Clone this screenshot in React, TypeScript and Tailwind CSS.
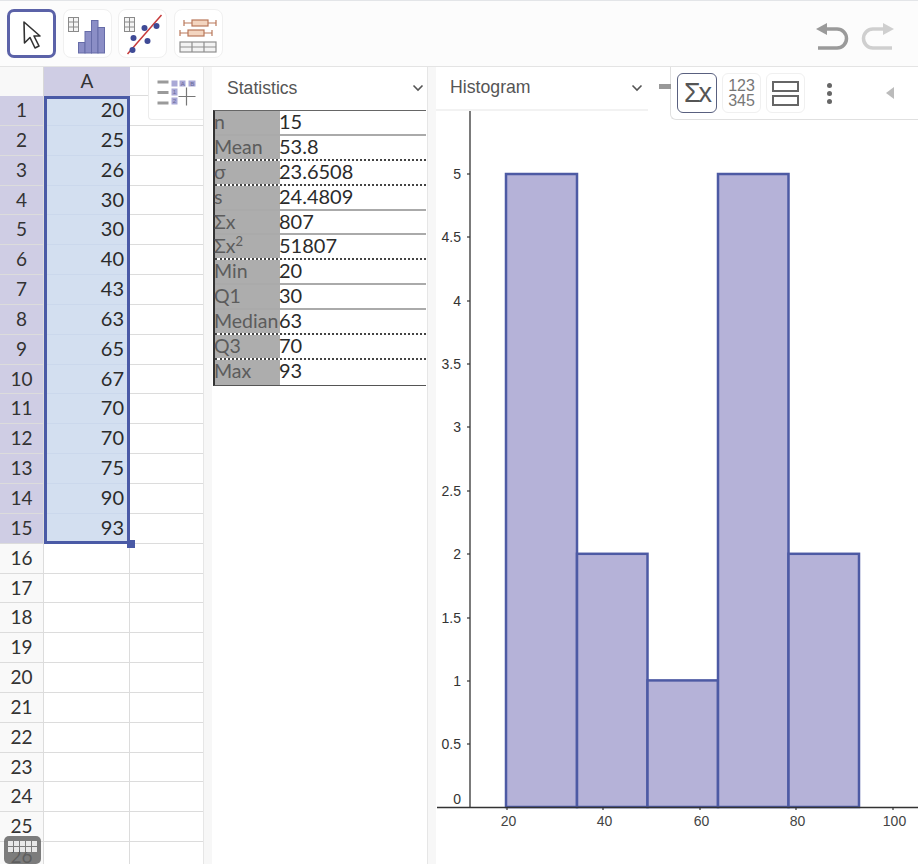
import React from "react";

const colA = [20, 25, 26, 30, 30, 40, 43, 63, 65, 67, 70, 70, 75, 90, 93];
const rows = Array.from({ length: 26 }, (_, i) => i + 1);
const stats: { k: React.ReactNode; v: string; dotted: boolean }[] = [
  { k: "n", v: "15", dotted: false },
  { k: "Mean", v: "53.8", dotted: true },
  { k: "σ", v: "23.6508", dotted: true },
  { k: "s", v: "24.4809", dotted: false },
  { k: "Σx", v: "807", dotted: false },
  { k: <>Σx<sup className="text-[13px] leading-none align-[7px] top-0">2</sup></>, v: "51807", dotted: true },
  { k: "Min", v: "20", dotted: false },
  { k: "Q1", v: "30", dotted: false },
  { k: "Median", v: "63", dotted: true },
  { k: "Q3", v: "70", dotted: true },
  { k: "Max", v: "93", dotted: false },
];

function ToolButton({ active, children }: { active?: boolean; children: React.ReactNode }) {
  return (
    <div
      className={
        active
          ? "w-[49px] h-[49px] rounded-[7px] border-[3px] border-[#5b62a8] bg-white flex items-center justify-center"
          : "w-[49px] h-[49px] rounded-[8px] border border-[#f0f0f0] bg-white flex items-center justify-center"
      }
    >
      {children}
    </div>
  );
}

function GridGlyph() {
  return (
    <g fill="none" stroke="#8a8a8a" strokeWidth="1">
      <rect x="3.5" y="5.500" width="10" height="14" fill="#f4f4f4" />
      <path d="M8.500 5.500V19.500M3.500 10H13.500M3.500 15H13.500" />
    </g>
  );
}

function Chart() {
  const bars = [
    [506, 577, 5],
    [577, 647.5, 2],
    [647.5, 718, 1],
    [718, 788.5, 5],
    [788.5, 859, 2],
  ];
  const yTicks: [string, number][] = [
    ["5", 174], ["4.5", 237], ["4", 301], ["3.5", 364], ["3", 427], ["2.5", 491],
    ["2", 554], ["1.5", 618], ["1", 681], ["0.5", 744],
  ];
  const xTicks: [string, number][] = [["20", 507], ["40", 603], ["60", 700], ["80", 796], ["100", 893]];
  const ox = 436;
  const oy = 111;
  return (
    <svg width="482" height="753" viewBox={`${ox} ${oy} 482 753`} className="block" fontFamily="'Liberation Sans', Arial, sans-serif">
      {bars.map(([a, b, v]) => (
        <rect key={a} x={a} y={807 - v * 126.6} width={b - a} height={v * 126.6} fill="#b5b2d8" stroke="#4d5aa4" strokeWidth="2.500" />
      ))}
      <path d="M470 111V807" stroke="#333" strokeWidth="1.300" />
      <path d="M437 807.500H918" stroke="#333" strokeWidth="1.300" />
      {yTicks.map(([t, y]) => (
        <g key={t}>
          <path d={`M470 ${y}h-3`} stroke="#333" strokeWidth="1.200" />
          <text x="461" y={y + 5} textAnchor="end" fontSize="14" fill="#333">{t}</text>
        </g>
      ))}
      <text x="461" y="804" textAnchor="end" fontSize="14" fill="#333">0</text>
      {xTicks.map(([t, x]) => (
        <g key={t}>
          <path d={`M${x} 807v3`} stroke="#333" strokeWidth="1.200" />
          <text x={x + 1.500} y="826" textAnchor="middle" fontSize="14" fill="#444">{t}</text>
        </g>
      ))}
    </svg>
  );
}

function Chevron() {
  return (
    <svg width="12" height="8" viewBox="0 0 12 8" fill="none" stroke="#555" strokeWidth="1.600">
      <path d="M1.500 1.500 6 6l4.500-4.500" />
    </svg>
  );
}

export default function App() {
  return (
    <div className="relative w-[918px] h-[864px] overflow-hidden bg-white font-['Lato','Liberation_Sans',sans-serif] text-[#2b2b2b]">
      {/* Top toolbar */}
      <div className="h-[67px] bg-[#fcfcfc] border-t border-b border-t-[#e3e5e8] border-b-[#e4e4e4] flex items-center pl-[7px] pr-[23px] gap-[6.5px] box-border">
        <ToolButton active>
          <svg width="24" height="32" viewBox="0 0 24 32" fill="none" stroke="#333" strokeWidth="1.600" strokeLinejoin="round">
            <path d="M4 4 4.500 25 10 19.500 15 30l4-2-5-10h6z" fill="#fff" />
          </svg>
        </ToolButton>
        <ToolButton>
          <svg width="44" height="44" viewBox="0 0 44 44">
            <GridGlyph />
            <g fill="#8b8ec6" stroke="#666ca8" strokeWidth="1">
              <rect x="13.500" y="30.500" width="6.500" height="10.500" />
              <rect x="20" y="19.500" width="6.500" height="21.500" />
              <rect x="26.500" y="8.500" width="6.500" height="32.500" />
              <rect x="33" y="15.500" width="6.500" height="25.500" />
            </g>
          </svg>
        </ToolButton>
        <ToolButton>
          <svg width="44" height="44" viewBox="0 0 44 44">
            <GridGlyph />
            <path d="M6.500 42 40.500 3" stroke="#c73a3a" strokeWidth="1.500" />
            <g fill="#3f4a96">
              <circle cx="11.500" cy="38" r="3" />
              <circle cx="12.500" cy="26" r="3" />
              <circle cx="26.500" cy="29" r="3" />
              <circle cx="23.500" cy="16" r="3" />
              <circle cx="35.500" cy="14" r="3" />
            </g>
          </svg>
        </ToolButton>
        <ToolButton>
          <svg width="44" height="44" viewBox="0 0 44 44" fill="none">
            <g stroke="#b9785a" strokeWidth="1.200">
              <path d="M8 8v6M40 8v6M8 11h8M32 11h8" />
              <rect x="16" y="8" width="16" height="6" fill="#f3d5c0" />
              <path d="M4 18v6M36 18v6M4 21h8M28 21h8" />
              <rect x="12" y="18" width="16" height="6" fill="#f3d5c0" />
            </g>
            <g stroke="#8f8f8f" strokeWidth="1.200">
              <rect x="4" y="30" width="36" height="10" fill="#f3f3f3" />
              <path d="M4 35h36M16 30v10M28 30v10" />
            </g>
          </svg>
        </ToolButton>
        <div className="ml-auto flex items-center gap-[8px]">
          <svg width="36" height="32" viewBox="0 0 36 32" fill="none" stroke="#9a9a9a" strokeWidth="3.500">
            <path d="M10 11h12a9.500 9.500 0 0 1 0 19H3" />
            <path d="M1 11 12 5v12z" fill="#9a9a9a" stroke="none" />
          </svg>
          <svg width="36" height="32" viewBox="0 0 36 32" fill="none" stroke="#cfcfcf" strokeWidth="3.500">
            <path d="M26 11H14a9.500 9.500 0 0 0 0 19h19" />
            <path d="M35 11 24 5v12z" fill="#cfcfcf" stroke="none" />
          </svg>
        </div>
      </div>

      {/* Panels */}
      <div className="flex h-[797px]">
        {/* Spreadsheet */}
        <div className="w-[203px] shrink-0 relative overflow-hidden">
          <div className="flex h-[29px]">
            <div className="w-[44px] bg-[#f8f8f8] border-r border-[#d8d8d8]" />
            <div className="w-[86px] bg-[#cfcde4] text-center text-[19px] leading-[27px] text-[#333]">A</div>
            <div className="flex-1 border-b border-[#dcdcdc]" />
          </div>
          {rows.map((r) => {
            const v = colA[r - 1];
            const selected = r <= 15;
            return (
              <div key={r} className="flex h-[29.85px]">
                <div className={`w-[44px] shrink-0 text-center text-[19px] leading-[27px] border-b border-r border-[#dcdcdc] text-[#333] ${selected ? "bg-[#cfcde4]" : "bg-[#f9f9f9]"}`}>
                  {r}
                </div>
                <div className={`w-[86px] shrink-0 text-right pr-[5px] text-[20px] leading-[27px] border-r border-b ${selected ? "bg-[#d3dff0] border-[#cbd8ec]" : "border-[#dcdcdc]"}`}>
                  {v}
                </div>
                <div className="flex-1 border-b border-[#dcdcdc]" />
              </div>
            );
          })}
          {/* Selection outline */}
          <div className="absolute left-[44px] top-[29px] w-[86px] h-[448px] border-[3px] border-[#4a5aa6]" />
          <div className="absolute left-[127px] top-[473px] w-[8px] h-[8px] bg-[#4a5aa6]" />
          {/* Keyboard button */}
          <div className="absolute left-[4px] top-[769px] w-[37px] h-[28px] rounded-[5px] bg-[#666]/85 flex flex-col items-center justify-start pt-[5px] gap-[1px]">
            {[0, 1].map((i) => (
              <div key={i} className="flex gap-[1px]">
                {[0, 1, 2, 3, 4].map((j) => (
                  <div key={j} className="w-[5px] h-[5px] bg-[#e8e8e8]" />
                ))}
              </div>
            ))}
          </div>
        </div>

        <div className="w-[9px] shrink-0 bg-[#f7f7f7] border-l border-[#e6e6e6]" />

        {/* Statistics */}
        <div className="w-[215px] shrink-0">
          <div className="h-[43px] flex items-center justify-between pl-[15px] pr-[3px] pb-[1px] text-[17.600px] text-[#555] bg-white">
            <span className="font-['Liberation_Sans',sans-serif]">Statistics</span>
            <Chevron />
          </div>
          <div className="ml-[1px] border-l-2 border-l-[#333] border-t border-t-[#666] border-b border-b-[#555] w-[213px]">
            {stats.map((s, i) => (
              <div
                key={i}
                className={`flex h-[24.9px] leading-[21px] ${i < stats.length - 1 ? (s.dotted ? "border-b-2 border-dotted border-[#444]" : "border-b-2 border-[#aaa]") : ""}`}
              >
                <div className="w-[65px] shrink-0 bg-[#adadad] text-[#5c5c5c] text-[19.500px] whitespace-nowrap -indent-[1px]">{s.k}</div>
                <div className="flex-1 text-[#2b2b2b] text-[20px] bg-white -indent-[1px]">{s.v}</div>
              </div>
            ))}
          </div>
        </div>

        <div className="w-[9px] shrink-0 bg-[#f7f7f7] border-l border-[#e6e6e6]" />

        {/* Graph */}
        <div className="flex-1 min-w-0">
          <div className="h-[44px] flex items-center pl-[14px] w-[212px] justify-between pr-[5px] pb-[1px] text-[17.700px] text-[#555] border-b-2 border-[#f2f2f2]">
            <span className="font-['Liberation_Sans',sans-serif]">Histogram</span>
            <Chevron />
          </div>
          <Chart />
        </div>
      </div>

      {/* Floating sheet toggle */}
      <div className="absolute left-[148px] top-[67px] w-[55px] h-[53px] bg-white rounded-bl-[4px] border-l border-b border-[#ececec] flex items-center justify-center">
        <svg width="40" height="32" viewBox="0 0 40 32" fontFamily="'Liberation Sans', sans-serif" fontSize="6" fill="#6a6a9a">
          <g fill="#9a9a9a">
            <rect x="1.500" y="3.500" width="11" height="3" />
            <rect x="1.500" y="14" width="11" height="3" />
            <rect x="1.500" y="24.500" width="11" height="3" />
          </g>
          <g fill="#a9a8d6">
            <rect x="15.500" y="3.500" width="6" height="6" />
            <rect x="23.500" y="3.500" width="6" height="6" />
            <rect x="32.500" y="3.500" width="7" height="6" />
            <rect x="15.500" y="11.500" width="6" height="7" />
            <rect x="15.500" y="20.500" width="6" height="7" />
          </g>
          <text x="24.800" y="8.800">A</text>
          <text x="34.300" y="8.800">B</text>
          <text x="16.800" y="17.200">1</text>
          <text x="16.800" y="26.200">2</text>
          <path d="M22.500 19.500h17M30.500 10.500v18" stroke="#777" strokeWidth="1.200" />
        </svg>
      </div>

      {/* Floating stats toolbar */}
      <div className="absolute left-[670px] top-[67px] w-[248px] h-[53px] bg-white rounded-bl-[6px] border-l border-b border-[#e0e0e0] flex items-center pl-[6px] gap-[5px]">
        <div className="absolute -left-[12px] top-[17px] w-[12px] h-[5px] bg-[#999]" />
        <div className="w-[40px] h-[40px] rounded-[6px] border border-[#59607f] flex items-center justify-center text-[27px] tracking-[-2px] text-[#555] font-['Liberation_Sans',sans-serif]">Σx</div>
        <div className="w-[39px] h-[40px] rounded-[6px] border border-[#f0f0f0] flex items-center justify-center text-center text-[16px] leading-[15px] font-medium text-[#777] font-['Liberation_Sans',sans-serif]">
          <span>123<br />345</span>
        </div>
        <div className="w-[39px] h-[40px] rounded-[6px] border border-[#f0f0f0] flex flex-col items-center justify-center gap-[3px]">
          <div className="w-[27px] h-[11px] border-2 border-[#666]" />
          <div className="w-[27px] h-[11px] border-2 border-[#666]" />
        </div>
        <div className="w-[6px] ml-[16px] flex flex-col gap-[3px] items-center">
          <div className="w-[5px] h-[5px] rounded-full bg-[#666]" />
          <div className="w-[5px] h-[5px] rounded-full bg-[#666]" />
          <div className="w-[5px] h-[5px] rounded-full bg-[#666]" />
        </div>
        <svg className="ml-[48px]" width="10" height="14" viewBox="0 0 10 14">
          <path d="M9 1v12L1 7z" fill="#bbb" />
        </svg>
      </div>
    </div>
  );
}
